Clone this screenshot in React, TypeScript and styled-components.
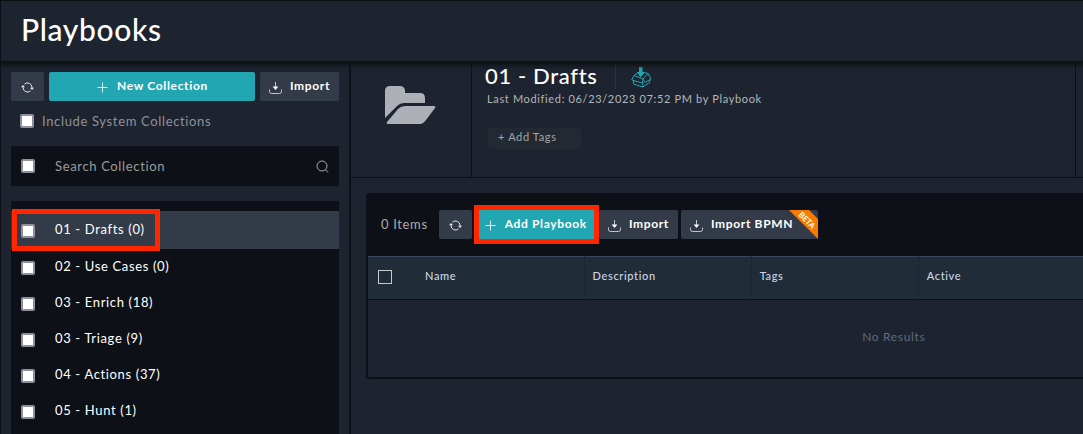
import React from "react";
import styled, { createGlobalStyle, css } from "styled-components";

const color = {
  page: "#1d2430",
  dark: "#0d1117",
  button: "#343b48",
  teal: "#22a6b1",
  muted: "#8f9298",
  red: "#ff2600",
};

const GlobalStyle = createGlobalStyle`
  *, *::after { box-sizing: border-box; }
  html, body, #root { height: 100%; margin: 0; }
  body {
    background: ${color.page};
    color: #fff;
    font-family: Lato, "Liberation Sans", sans-serif;
    font-size: 13px;
    line-height: 16px;
    letter-spacing: 0.05em;
    overflow: hidden;
  }
  button, input { font: inherit; letter-spacing: inherit; color: inherit; }
`;

const Page = styled.div`
  display: flex;
  flex-direction: column;
  height: 100%;
  border-top: 1px solid ${color.dark};
  border-left: 1px solid ${color.dark};
`;

const Header = styled.header`
  position: relative;
  z-index: 1;
  flex: none;
  height: 60px;
  padding: 10px 20px;
  background: ${color.page};
  box-shadow: 0 2px 5px 2px #0c0e11;
`;

const PageTitle = styled.h1`
  margin: 0;
  font-size: 30px;
  line-height: 36px;
  font-weight: 500;
`;

const Body = styled.div`
  display: flex;
  flex: 1;
  min-height: 0;
`;

const Sidebar = styled.aside`
  display: flex;
  flex-direction: column;
  flex: none;
  width: 350px;
  padding: 11px 10px 0;
  border-right: 2px solid ${color.dark};
`;

const ButtonRow = styled.div`
  display: flex;
  gap: 5px;
`;

const Button = styled.button<{ $primary?: boolean; $grow?: boolean; $iconOnly?: boolean }>`
  position: relative;
  display: flex;
  align-items: center;
  justify-content: center;
  gap: 8px;
  flex: ${(p) => (p.$grow ? "1" : "none")};
  height: 29px;
  padding: 0 ${(p) => (p.$iconOnly ? "10px" : "9px")} 2px;
  border: 0;
  border-radius: 2px;
  background: ${(p) => (p.$primary ? color.teal : color.button)};
  font-size: 12px;
  font-weight: 700;
  white-space: nowrap;
`;

const ButtonIcon = styled.svg`
  flex: none;
  width: 13px;
  height: 13px;
  margin-top: 3px;
  fill: none;
  stroke: #e4e6e9;
`;

const CheckBox = styled.input.attrs({ type: "checkbox" })`
  appearance: none;
  flex: none;
  width: 14px;
  height: 14px;
  margin: 0;
  border: 2px solid #8f8f9d;
  border-radius: 2px;
  background: #fff;
`;

const IncludeLabel = styled.label`
  display: flex;
  align-items: center;
  gap: 8px;
  margin: 12px 0 17px 9px;
  color: ${color.muted};
`;

const SearchBar = styled.div`
  display: flex;
  align-items: center;
  gap: 20px;
  height: 40px;
  padding: 0 10px;
  background: ${color.dark};
`;

const SearchInput = styled.input`
  flex: 1;
  min-width: 0;
  padding: 0;
  border: 0;
  outline: 0;
  background: none;
  &::placeholder { color: #9c9c99; opacity: 1; }
`;

const CollectionList = styled.ul`
  flex: 1;
  min-height: 0;
  margin: 15px 0 0;
  padding: 10px 0 0;
  background: ${color.dark};
  list-style: none;
  overflow: hidden;
`;

const highlight = css`
  &::after {
    content: "";
    position: absolute;
    border: 5px solid ${color.red};
    pointer-events: none;
  }
`;

const CollectionItem = styled.li<{ $selected?: boolean }>`
  position: relative;
  height: ${(p) => (p.$selected ? "38px" : "36px")};
  background: ${(p) => (p.$selected ? color.button : "none")};
  ${(p) => p.$selected && highlight}
  &::after { inset: -2px auto -2px 1px; width: 148px; }
`;

const CollectionLabel = styled.label`
  display: flex;
  align-items: center;
  gap: 20px;
  height: 100%;
  padding: 0 10px 2px;
  input { margin-top: 4px; }
`;

const Main = styled.main`
  display: flex;
  flex-direction: column;
  flex: 1;
  min-width: 0;
`;

const Summary = styled.section`
  display: flex;
  height: 117px;
  border-bottom: 1px solid ${color.dark};
`;

const FolderCell = styled.div`
  display: flex;
  align-items: flex-start;
  justify-content: center;
  flex: none;
  width: 121px;
  padding: 25px 2px 0 0;
  border-right: 1px solid ${color.dark};
`;

const Details = styled.div`
  flex: 1;
  padding: 1px 13px;
  margin-right: 7px;
  border-right: 1px solid ${color.dark};
`;

const TitleRow = styled.div`
  display: flex;
  align-items: center;
  height: 28px;
`;

const PlaybookTitle = styled.h2`
  margin: 0 18px 0 0;
  font-size: 22px;
  line-height: 26px;
  font-weight: 500;
`;

const TitleDivider = styled.span`
  align-self: stretch;
  width: 1px;
  margin-right: 15px;
  background: #2d3541;
`;

const Modified = styled.p`
  margin: 0 2px 20px;
  color: #b4b6ba;
  font-size: 11px;
  line-height: 18px;
`;

const AddTags = styled.button`
  display: block;
  width: 93px;
  height: 21px;
  margin-left: 3px;
  padding: 0 10px 3px;
  border: 0;
  border-radius: 2px;
  background: #222932;
  color: #a3a5a8;
  font-size: 11px;
  line-height: 16px;
  text-align: left;
`;

const Panel = styled.section`
  margin: 15px 0 0 15px;
  border: 2px solid ${color.dark};
  border-right: 0;
  border-radius: 3px 0 0 3px;
  overflow: hidden;
`;

const Toolbar = styled.div`
  display: flex;
  align-items: center;
  gap: 3px;
  height: 61px;
  padding: 0 13px 2px;
  background: ${color.dark};
`;

const ItemCount = styled.span`
  margin-right: 8px;
  padding-bottom: 1px;
  color: #abacad;
`;

const Highlighted = styled.div`
  position: relative;
  ${highlight}
  &::after { inset: -5px -3px -5px -1px; z-index: 1; }
`;

const BetaBadge = styled.svg`
  position: absolute;
  top: 0;
  right: 0;
  width: 29px;
  height: 29px;
`;

const BpmnButton = styled(Button)`
  padding-right: 25px;
`;

const Table = styled.table`
  width: 100%;
  min-width: 1052px;
  border-collapse: collapse;
  table-layout: fixed;
  font-size: 12px;
`;

const HeadCell = styled.th<{ $check?: boolean }>`
  width: ${(p) => (p.$check ? "49px" : "auto")};
  height: 43px;
  padding: 0 8px 4px;
  padding-left: ${(p) => (p.$check ? "10px" : "8px")};
  border-top: 1px solid #3a465c;
  border-bottom: 1px solid ${color.dark};
  border-right: ${(p) => (p.$check ? "0" : "1px solid #1d2734")};
  background: #212c39;
  color: #cbd6e2;
  font-size: 11px;
  font-weight: 500;
  text-align: left;
`;

const SelectAll = styled.input.attrs({ type: "checkbox" })`
  appearance: none;
  display: block;
  width: 14px;
  height: 14px;
  margin: 2px 0 0;
  border: 1px solid #c9c9c9;
`;

const EmptyCell = styled.td`
  height: 77px;
  padding: 0 0 3px;
  color: #5f6c7e;
  text-align: center;
`;

const RefreshIcon = () => (
  <ButtonIcon viewBox="0 0 13 13" aria-hidden="true">
    <path d="M3.500 3.100A4.500 4.500 0 0 1 11 6.500V7.500M9.500 9.900A4.500 4.500 0 0 1 2 6.500V5.500" />
    <path d="M9 6.800h4L11 9zM0 6.200h4L2 4z" fill="#e4e6e9" stroke="none" />
  </ButtonIcon>
);

const PlusIcon = () => (
  <ButtonIcon viewBox="0 0 13 13" aria-hidden="true">
    <path d="M6.500 1.500v10M1.500 6.500h10" />
  </ButtonIcon>
);

const ImportIcon = () => (
  <ButtonIcon viewBox="0 0 13 13" aria-hidden="true">
    <path d="M6.500 1v6M.500 8.500v2q0 2 2 2h8q2 0 2-2v-2" strokeOpacity="0.8" />
    <path d="M3.600 5.500h5.800L6.500 9z" fill="#fff" stroke="none" />
  </ButtonIcon>
);

const SearchIcon = () => (
  <svg width="13" height="13" viewBox="0 0 13 13" fill="none" stroke="#a5a7aa" aria-hidden="true">
    <circle cx="6" cy="6" r="5" />
    <path d="M9.300 9.500l2.700 3" />
  </svg>
);

const FolderIcon = () => (
  <svg width="52" height="38" viewBox="0 0 52 38" fill="#adb0b6" aria-hidden="true">
    <path d="M1 32V5Q1 0 6 0h10q4 0 5 4v3h15q5 0 5 5v5H20q-4 0-7 3z" />
    <path d="M21 20h29q2 0 1 2L42 34q-3 4-6 4H4q-2 0-1-2l11-13q3-3 7-3z" />
  </svg>
);

const TitleIcon = styled.svg`
  width: 21px;
  height: 21px;
  margin-top: 2px;
  fill: none;
  stroke: ${color.teal};
`;

const BoxIcon = () => (
  <TitleIcon viewBox="0 0 21 21" aria-hidden="true">
    <path d="M8 0h3.500v5h2.500L9.700 10.500 5.500 5H8z" fill={color.teal} stroke="none" />
    <path d="M6 6.500L3 8.500l9 3.500L17 6.500l-3.500-1M3 8.500L.700 13l10.800 3 .500-4M2.500 13.500v3.500l9.300 3V16M11.800 20l6.700-4.500.500-3M17 6.500l3 5.500-6 3.500-2-3.500" />
  </TitleIcon>
);

const collections = [
  "01 - Drafts (0)",
  "02 - Use Cases (0)",
  "03 - Enrich (18)",
  "03 - Triage (9)",
  "04 - Actions (37)",
  "05 - Hunt (1)",
];

export default function App() {
  return (
    <>
      <GlobalStyle />
      <Page>
        <Header>
          <PageTitle>Playbooks</PageTitle>
        </Header>
        <Body>
          <Sidebar>
            <ButtonRow>
              <Button $iconOnly aria-label="Refresh collections"><RefreshIcon /></Button>
              <Button $primary $grow><PlusIcon />New Collection</Button>
              <Button><ImportIcon />Import</Button>
            </ButtonRow>
            <IncludeLabel>
              <CheckBox />
              Include System Collections
            </IncludeLabel>
            <SearchBar>
              <CheckBox aria-label="Select all collections" />
              <SearchInput placeholder="Search Collection" aria-label="Search Collection" />
              <SearchIcon />
            </SearchBar>
            <CollectionList>
              {collections.map((name, i) => (
                <CollectionItem key={name} $selected={i === 0}>
                  <CollectionLabel>
                    <CheckBox />
                    {name}
                  </CollectionLabel>
                </CollectionItem>
              ))}
            </CollectionList>
          </Sidebar>
          <Main>
            <Summary>
              <FolderCell><FolderIcon /></FolderCell>
              <Details>
                <TitleRow>
                  <PlaybookTitle>01 - Drafts</PlaybookTitle>
                  <TitleDivider />
                  <BoxIcon />
                </TitleRow>
                <Modified>Last Modified: 06/23/2023 07:52 PM by Playbook</Modified>
                <AddTags>+ Add Tags</AddTags>
              </Details>
            </Summary>
            <Panel>
              <Toolbar>
                <ItemCount>0 Items</ItemCount>
                <Button $iconOnly aria-label="Refresh playbooks"><RefreshIcon /></Button>
                <Highlighted>
                  <Button $primary><PlusIcon />Add Playbook</Button>
                </Highlighted>
                <Button><ImportIcon />Import</Button>
                <BpmnButton>
                  <ImportIcon />Import BPMN
                  <BetaBadge viewBox="0 0 29 29">
                    <path d="M0 0H20L29 9V29Z" fill="#f57c00" />
                    <text x="18" y="13" transform="rotate(45 18 10)" fill="#fff" fontSize="8" fontWeight="700" textAnchor="middle" letterSpacing="0">BETA</text>
                  </BetaBadge>
                </BpmnButton>
              </Toolbar>
              <Table>
                <thead>
                  <tr>
                    <HeadCell $check><SelectAll aria-label="Select all playbooks" /></HeadCell>
                    <HeadCell>Name</HeadCell>
                    <HeadCell>Description</HeadCell>
                    <HeadCell>Tags</HeadCell>
                    <HeadCell>Active</HeadCell>
                    <HeadCell />
                    <HeadCell />
                  </tr>
                </thead>
                <tbody>
                  <tr><EmptyCell colSpan={7}>No Results</EmptyCell></tr>
                </tbody>
              </Table>
            </Panel>
          </Main>
        </Body>
      </Page>
    </>
  );
}
